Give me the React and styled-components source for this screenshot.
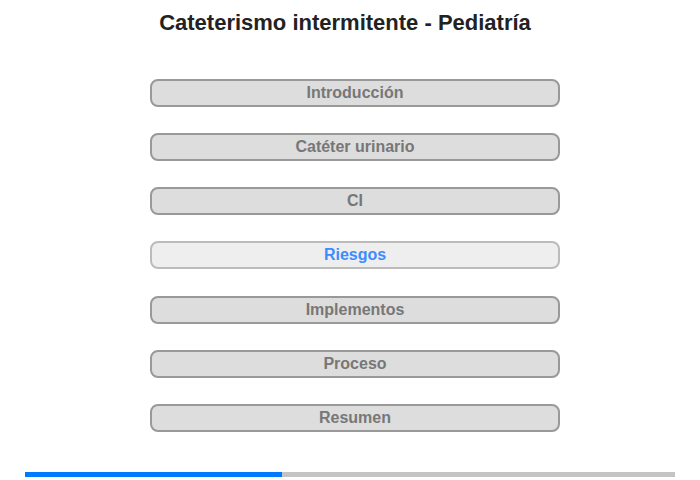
import React from 'react';
import styled, { createGlobalStyle } from 'styled-components';

const GlobalStyle = createGlobalStyle`
  body {
    margin: 0;
    background: #ffffff;
    font-family: "Liberation Sans", Arial, sans-serif;
  }
`;

const Page = styled.div`
  width: 700px;
  height: 480px;
  display: flex;
  flex-direction: column;
  align-items: center;
`;

const Title = styled.h1`
  margin: 10px 10px 0 0;
  font-size: 22px;
  font-weight: bold;
  color: #222222;
  line-height: 26px;
`;

const Menu = styled.nav`
  margin-top: 43px;
  margin-left: 10px;
  display: flex;
  flex-direction: column;
  gap: 26.17px;
`;

const MenuButton = styled.div`
  box-sizing: border-box;
  width: 410px;
  height: 28px;
  border: 2px solid ${(p) => (p.$active ? '#bbbbbb' : '#999999')};
  border-radius: 8px;
  background: ${(p) => (p.$active ? '#eeeeee' : '#dddddd')};
  color: ${(p) => (p.$active ? '#3c8cff' : '#777777')};
  font-size: 16px;
  font-weight: bold;
  display: flex;
  align-items: center;
  justify-content: center;
  cursor: pointer;
`;

const Progress = styled.div`
  margin-top: auto;
  margin-bottom: 3px;
  width: 650px;
  height: 5px;
  background: #c4c4c4;
`;

const ProgressFill = styled.div`
  height: 100%;
  background: #007bff;
`;

const items = [
  'Introducción',
  'Catéter urinario',
  'CI',
  'Riesgos',
  'Implementos',
  'Proceso',
  'Resumen',
];

const App = () => {
  const current = 3;
  return (
    <Page>
      <GlobalStyle />
      <Title>Cateterismo intermitente - Pediatría</Title>
      <Menu>
        {items.map((item, i) => (
          <MenuButton key={item} $active={i === current}>
            {item}
          </MenuButton>
        ))}
      </Menu>
      <Progress>
        <ProgressFill style={{ width: `${(257 / 650) * 100}%` }} />
      </Progress>
    </Page>
  );
};

export default App;
